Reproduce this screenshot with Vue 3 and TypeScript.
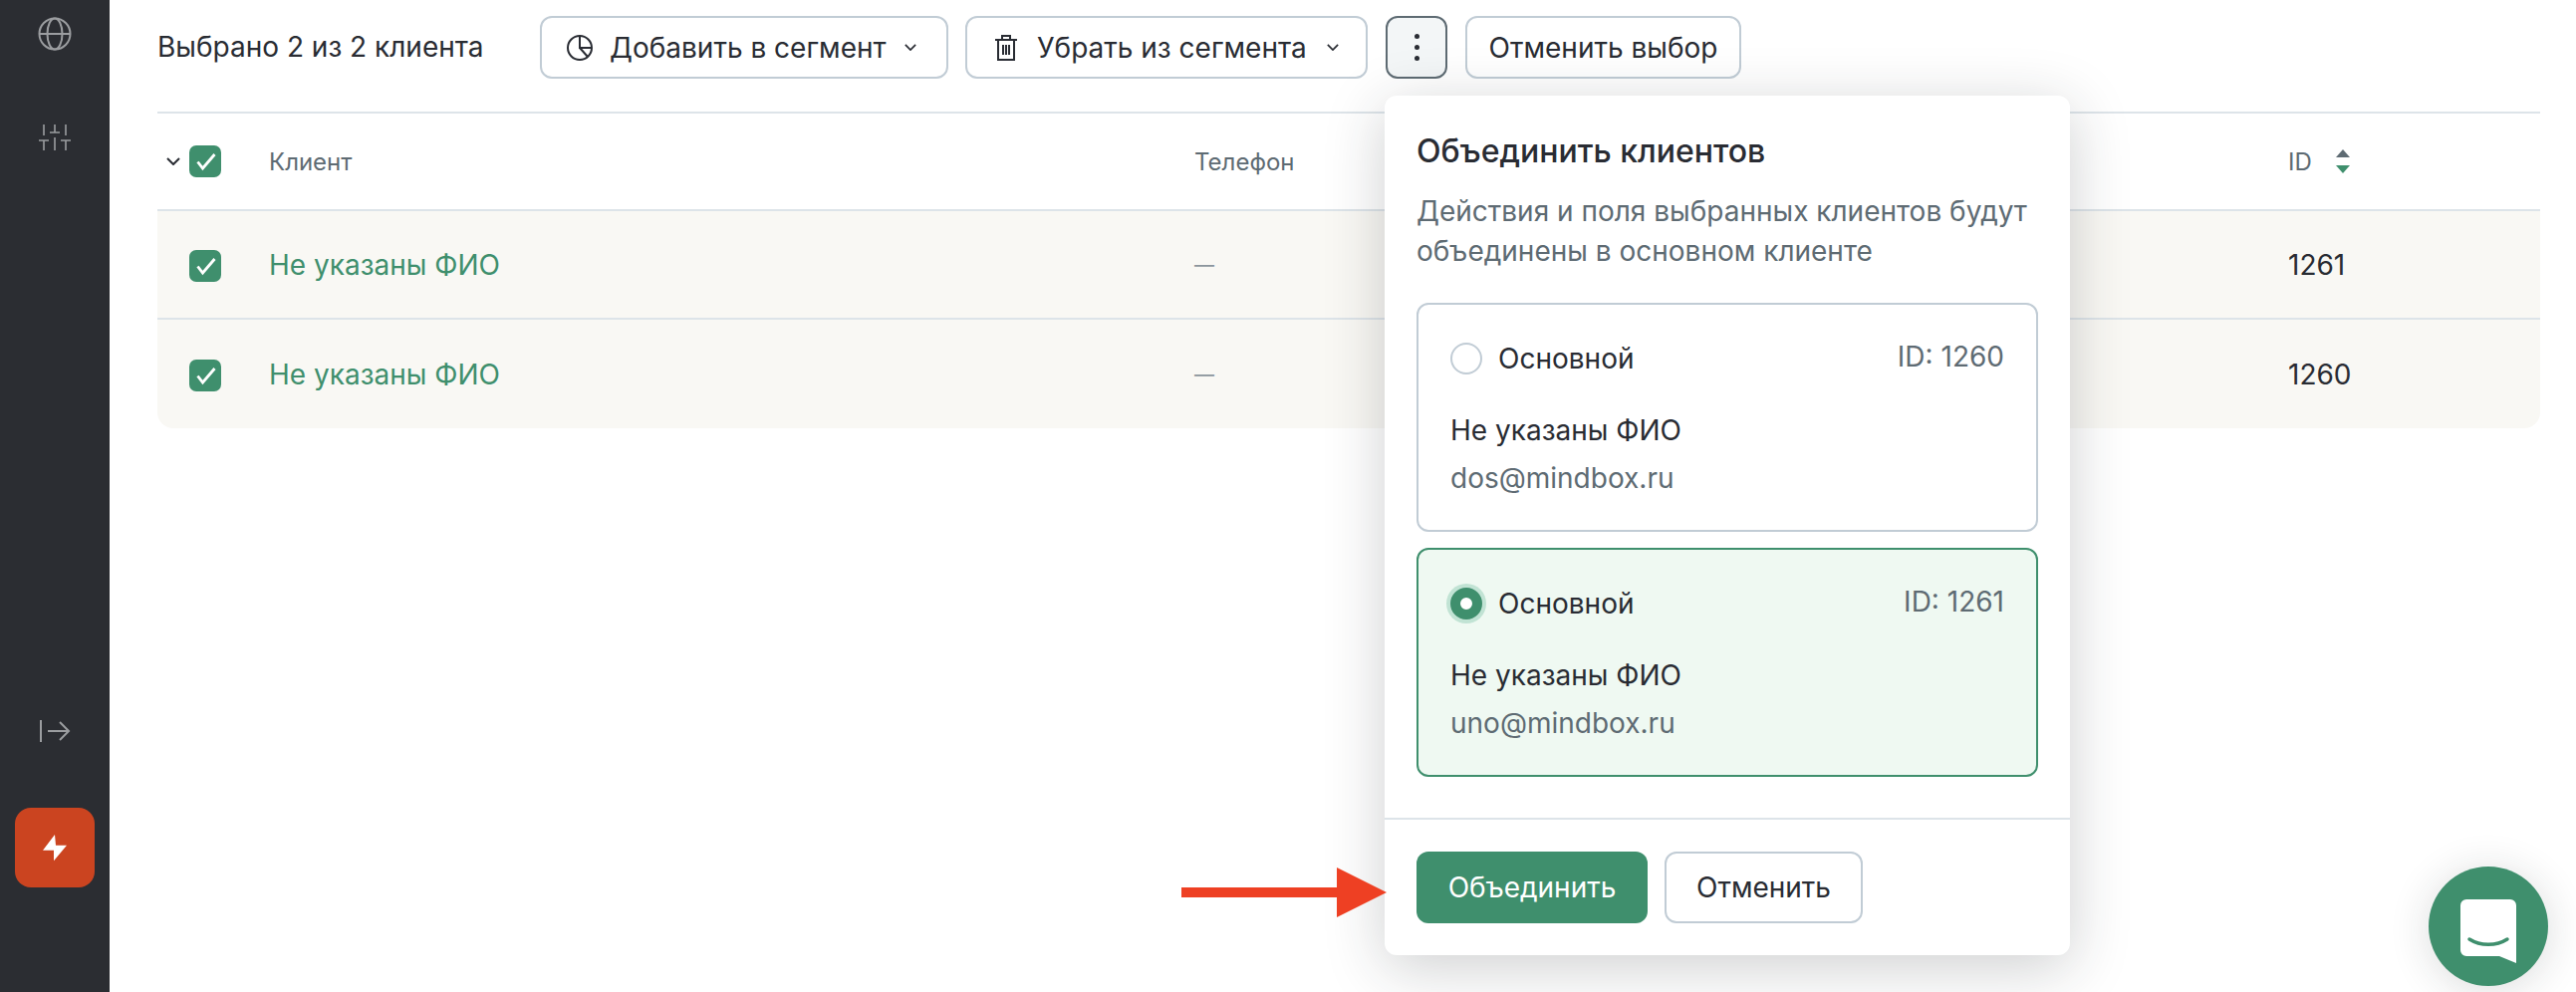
<script setup lang="ts">
import { ref } from "vue"

const rows = ref([
	{ id: 1261, name: "Не указаны ФИО" },
	{ id: 1260, name: "Не указаны ФИО" }
])

const cards = ref([
	{ id: 1260, name: "Не указаны ФИО", email: "dos@mindbox.ru", main: false },
	{ id: 1261, name: "Не указаны ФИО", email: "uno@mindbox.ru", main: true }
])
</script>

<template>
	<div class="page">
		<aside class="sidebar">
			<svg class="side-icon globe" width="34" height="34" viewBox="0 0 34 34" fill="none" stroke="#9b9da0" stroke-width="2">
				<circle cx="17" cy="17" r="15.500" />
				<ellipse cx="17" cy="17" rx="7.500" ry="15.500" />
				<path d="M1.500 17h31" />
			</svg>
			<svg class="side-icon sliders" width="32" height="27" viewBox="0 0 32 27" fill="none" stroke="#9b9da0" stroke-width="1.600">
				<path d="M5 0v11M16 0v8M27 0v11M11 8h10M0 16h10M5 16v10M16 13v13M22 16h10M27 16v10" />
			</svg>
			<div class="spacer"></div>
			<svg class="side-icon collapse" width="32" height="24" viewBox="0 0 32 24" fill="none" stroke="#9b9da0" stroke-width="2">
				<path d="M2 1v22M9 12h21M21 3l9 9-9 9" />
			</svg>
			<div class="bolt-btn">
				<svg width="24" height="27" viewBox="0 0 24 27" fill="#fff">
					<path d="M12 0 0 15.700h11v10.600l13-15.600H13z" />
				</svg>
			</div>
		</aside>

		<main class="main">
			<div class="toolbar">
				<span class="selected">Выбрано 2 из 2 клиента</span>
				<button class="btn seg-add">
					<svg width="28" height="28" viewBox="0 0 28 28" fill="none" stroke="#292c33" stroke-width="2">
						<circle cx="14" cy="14" r="12" />
						<path d="M14 2v12h12M14 14l8 9" />
					</svg>
					<span>Добавить в сегмент</span>
					<svg class="caret" width="12" height="7" viewBox="0 0 14 8" fill="none" stroke="#292c33" stroke-width="2">
						<path d="m1 1 6 6 6-6" />
					</svg>
				</button>
				<button class="btn seg-remove">
					<svg width="22" height="28" viewBox="0 0 22 28" fill="none" stroke="#292c33" stroke-width="2">
						<path d="M0 6h22M7 6V2h8v4M3 6v20h16V6M8 11v10M11 11v10M14 11v10" />
					</svg>
					<span>Убрать из сегмента</span>
					<svg class="caret" width="12" height="7" viewBox="0 0 14 8" fill="none" stroke="#292c33" stroke-width="2">
						<path d="m1 1 6 6 6-6" />
					</svg>
				</button>
				<button class="btn dots">
					<i></i><i></i><i></i>
				</button>
				<button class="btn cancel-select">Отменить выбор</button>
			</div>

			<div class="table">
				<div class="row head">
					<div class="check-cell">
						<svg class="head-caret" width="14" height="8" viewBox="0 0 14 8" fill="none" stroke="#292c33" stroke-width="2">
							<path d="m1 1 6 6 6-6" />
						</svg>
						<span class="check">
							<svg width="32" height="32" viewBox="0 0 32 32" fill="none" stroke="#fff" stroke-width="2.800">
								<path d="m8.500 16.500 5 6.500L25.500 9" />
							</svg>
						</span>
					</div>
					<div>Клиент</div>
					<div>Телефон</div>
					<div class="id-head">
						ID
						<svg width="14" height="24" viewBox="0 0 14 24">
							<path d="M7 0l7 8H0z" fill="#5e6b73" />
							<path d="M7 24l7-8H0z" fill="#3f8f6d" />
						</svg>
					</div>
				</div>
				<div v-for="r in rows" :key="r.id" class="row body">
					<div class="check-cell">
						<span class="check">
							<svg width="32" height="32" viewBox="0 0 32 32" fill="none" stroke="#fff" stroke-width="2.800">
								<path d="m8.500 16.500 5 6.500L25.500 9" />
							</svg>
						</span>
					</div>
					<div class="client-name">{{ r.name }}</div>
					<div class="dash">—</div>
					<div>{{ r.id }}</div>
				</div>
			</div>

			<section class="popover">
				<div class="pop-body">
					<h2>Объединить клиентов</h2>
					<p>Действия и поля выбранных клиентов будут объединены в основном клиенте</p>
					<div v-for="c in cards" :key="c.id" class="card" :class="{ active: c.main }">
						<div class="card-top">
							<span class="radio"></span>
							<span class="radio-label">Основной</span>
							<span class="card-id">ID: {{ c.id }}</span>
						</div>
						<div class="card-name">{{ c.name }}</div>
						<div class="card-mail">{{ c.email }}</div>
					</div>
				</div>
				<div class="pop-foot">
					<button class="btn-primary">Объединить</button>
					<button class="btn-outline">Отменить</button>
				</div>
			</section>

			<svg class="pointer" width="206" height="50" viewBox="0 0 206 50" fill="#ee4023">
				<path d="M0 20h156V0l50 25-50 25V30H0z" />
			</svg>

			<div class="chat">
				<svg width="56" height="64" viewBox="0 0 56 64">
					<path d="M6 0h44a6 6 0 0 1 6 6v58l-17-7H6a6 6 0 0 1-6-6V6a6 6 0 0 1 6-6z" fill="#fff" />
					<path d="M9 40c11 7 27 7 38 0" fill="none" stroke="#3f8f6d" stroke-width="3.500" stroke-linecap="round" />
				</svg>
			</div>
		</main>
	</div>
</template>

<style>
html,
body {
	margin: 0;
	background: #fff;
}
</style>

<style scoped>
.page {
	display: flex;
	height: 996px;
	overflow: hidden;
	font-family: Inter, "Noto Sans", sans-serif;
	font-size: 28px;
	color: #292c33;
}

button {
	font: inherit;
	color: inherit;
}

.sidebar {
	width: 110px;
	flex: none;
	display: flex;
	flex-direction: column;
	align-items: center;
	background: #2b2d32;
	padding: 17px 0 105px;
	box-sizing: border-box;
}

.sliders {
	margin-top: 74px;
}

.spacer {
	flex: 1;
}

.bolt-btn {
	width: 80px;
	height: 80px;
	margin-top: 65px;
	border-radius: 16px;
	background: #cb4420;
	display: flex;
	align-items: center;
	justify-content: center;
}

.main {
	position: relative;
	flex: 1;
	padding: 0 36px 0 48px;
	min-width: 0;
}

.toolbar {
	display: flex;
	align-items: flex-start;
	height: 112px;
	padding-top: 16px;
	box-sizing: border-box;
}

.selected {
	width: 384px;
	flex: none;
	line-height: 63px;
}

.btn {
	display: flex;
	align-items: center;
	height: 63px;
	box-sizing: border-box;
	border: 2px solid #c1ccd5;
	border-radius: 12px;
	background: #fff;
	padding: 0;
}

.seg-add {
	width: 410px;
	padding-left: 24px;
	gap: 16px;
	margin-right: 17px;
}

.seg-add .caret {
	margin-left: 2px;
}

.seg-remove {
	width: 404px;
	padding-left: 28px;
	gap: 20px;
	margin-right: 18px;
}

.dots {
	width: 62px;
	flex-direction: column;
	justify-content: center;
	gap: 6px;
	background: #f3f6f7;
	border-color: #5e6b73;
	margin-right: 18px;
}

.dots i {
	width: 5px;
	height: 5px;
	border-radius: 50%;
	background: #292c33;
}

.cancel-select {
	width: 277px;
	justify-content: center;
}

.table {
	border-top: 2px solid #dde4e9;
}

.row {
	display: grid;
	grid-template-columns: 112px 929px 1098px 1fr;
	align-items: center;
	box-sizing: border-box;
}

.head {
	height: 98px;
	font-size: 24px;
	color: #5e6b73;
	border-bottom: 2px solid #dde4e9;
}

.body {
	height: 107px;
	background: #f9f8f4;
}

.body + .body {
	height: 111px;
	border-top: 2px solid #dde4e9;
	border-radius: 0 0 16px 16px;
}

.check-cell {
	position: relative;
	padding-left: 32px;
}

.body .check-cell {
	top: 1px;
}

.head-caret {
	position: absolute;
	left: 9px;
	top: 12px;
}

.check {
	width: 32px;
	height: 32px;
	border-radius: 7px;
	background: #3f8f6d;
	display: flex;
	align-items: center;
	justify-content: center;
}

.client-name {
	color: #3f8f6d;
}

.dash {
	font-size: 20px;
	color: #8b959c;
}

.id-head {
	display: flex;
	align-items: center;
	gap: 24px;
}

.popover {
	position: absolute;
	left: 1280px;
	top: 96px;
	width: 688px;
	height: 863px;
	background: #fff;
	border-radius: 12px;
	box-shadow: 0 12px 60px rgba(30, 35, 40, 0.22);
	display: flex;
	flex-direction: column;
}

.pop-body {
	height: 727px;
	box-sizing: border-box;
	padding: 32px 32px 0;
	border-bottom: 2px solid #dde4e9;
}

h2 {
	margin: 0;
	font-size: 32px;
	font-weight: 500;
	line-height: 48px;
}

p {
	margin: 16px 0 32px;
	font-size: 28px;
	line-height: 40px;
	color: #5e6b73;
}

.card {
	height: 230px;
	box-sizing: border-box;
	border: 2px solid #c1ccd5;
	border-radius: 12px;
	padding: 38px 32px 0;
	margin-bottom: 16px;
}

.card.active {
	background: #eff9f2;
	border-color: #3f8f6d;
}

.card-top {
	display: flex;
	align-items: center;
	height: 32px;
}

.radio {
	width: 32px;
	height: 32px;
	box-sizing: border-box;
	border: 2px solid #c1ccd5;
	border-radius: 50%;
	background: #fff;
	margin-right: 16px;
	flex: none;
}

.active .radio {
	border: 10px solid #3f8f6d;
	box-shadow: 0 0 0 4px #c1e3d4;
}

.card-id {
	margin-left: auto;
	color: #5e6b73;
	position: relative;
	top: -2px;
}

.card-name {
	margin-top: 36px;
	line-height: 40px;
}

.card-mail {
	margin-top: 8px;
	line-height: 40px;
	color: #5e6b73;
}

.pop-foot {
	display: flex;
	gap: 17px;
	padding: 32px 32px 0;
}

.btn-primary,
.btn-outline {
	height: 72px;
	box-sizing: border-box;
	border-radius: 12px;
	padding: 0;
}

.btn-primary {
	width: 232px;
	border: none;
	background: #3f8f6d;
	color: #fff;
}

.btn-outline {
	width: 199px;
	border: 2px solid #c1ccd5;
	background: #fff;
}

.pointer {
	position: absolute;
	left: 1076px;
	top: 871px;
}

.chat {
	position: absolute;
	left: 2328px;
	top: 870px;
	width: 120px;
	height: 120px;
	border-radius: 50%;
	background: #3f8f6d;
	box-shadow: 0 4px 40px rgba(30, 35, 40, 0.16);
	display: flex;
	align-items: center;
	justify-content: center;
	padding-top: 10px;
	box-sizing: border-box;
}
</style>
